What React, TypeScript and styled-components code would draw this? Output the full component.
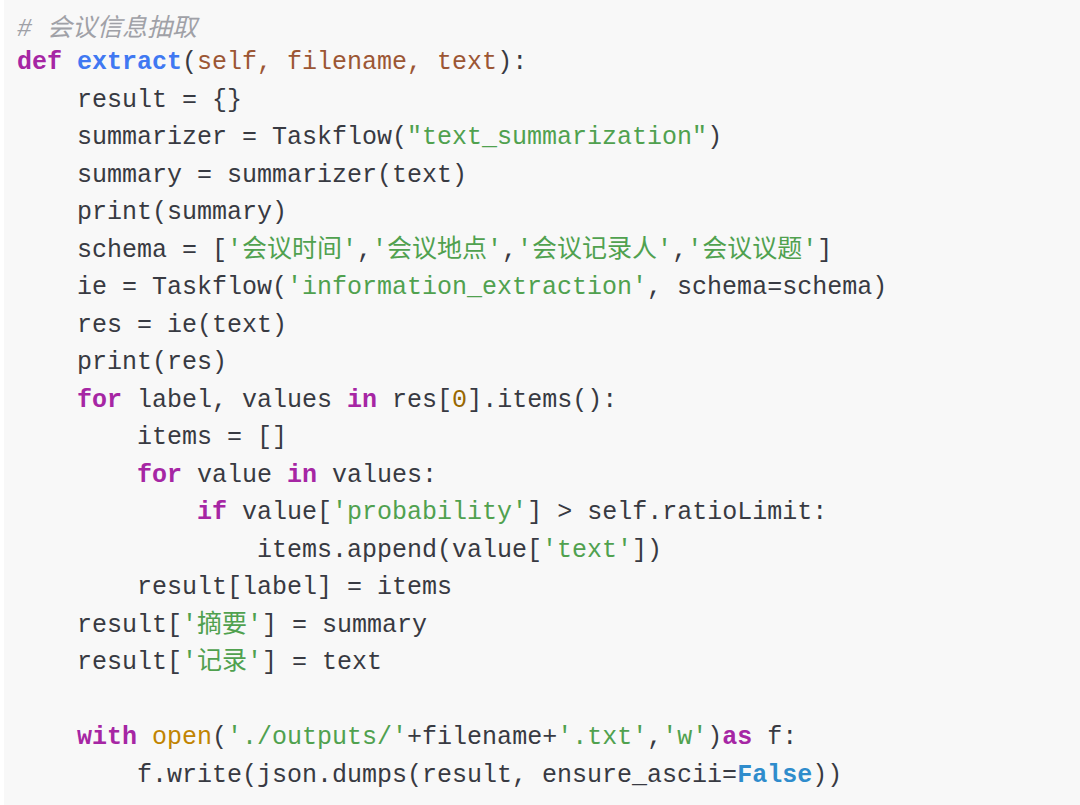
import React from "react";
import styled, { createGlobalStyle } from "styled-components";

const GlobalStyle = createGlobalStyle`
  html, body {
    margin: 0;
    padding: 0;
    background: #ffffff;
  }
  body {
    width: 1080px;
    height: 805px;
    overflow: hidden;
  }
`;

const Page = styled.div`
  display: flex;
  width: 1080px;
  height: 805px;
  padding-left: 4px;
  box-sizing: border-box;
  background: #ffffff;
`;

const CodeBlock = styled.pre`
  flex: 1;
  margin: 0;
  padding: 6.5px 0 0 13px;
  background: #f8f8f8;
  color: #383a42;
  font-family: "Liberation Mono", "Noto Sans CJK SC", monospace;
  font-size: 25px;
  line-height: 37.5px;
  white-space: pre;
  overflow: hidden;
`;

const Line = styled.div`
  height: 37.5px;
`;

type Kind = "kw" | "title" | "params" | "str" | "num" | "builtin" | "lit" | "comment";

const colors: Record<Kind, string> = {
  kw: "#a626a4",
  title: "#4078f2",
  params: "#9c5634",
  str: "#50a14f",
  num: "#986801",
  builtin: "#c18401",
  lit: "#2f8ccc",
  comment: "#a0a1a7",
};

const Tok = styled.span<{ $kind: Kind }>`
  color: ${(p) => colors[p.$kind]};
  font-weight: ${(p) => (p.$kind === "kw" || p.$kind === "title" || p.$kind === "lit" ? 700 : 400)};
  font-style: ${(p) => (p.$kind === "comment" ? "italic" : "normal")};
`;

const CommentCjk = styled.span`
  font-family: "Noto Sans CJK SC", sans-serif;
`;

type Part = string | [Kind, string];

const lines: Part[][] = [
  [["kw", "def"], " ", ["title", "extract"], "(", ["params", "self, filename, text"], "):"],
  ["    result = {}"],
  ["    summarizer = Taskflow(", ["str", "\"text_summarization\""], ")"],
  ["    summary = summarizer(text)"],
  ["    print(summary)"],
  [
    "    schema = [",
    ["str", "'会议时间'"],
    ",",
    ["str", "'会议地点'"],
    ",",
    ["str", "'会议记录人'"],
    ",",
    ["str", "'会议议题'"],
    "]",
  ],
  ["    ie = Taskflow(", ["str", "'information_extraction'"], ", schema=schema)"],
  ["    res = ie(text)"],
  ["    print(res)"],
  ["    ", ["kw", "for"], " label, values ", ["kw", "in"], " res[", ["num", "0"], "].items():"],
  ["        items = []"],
  ["        ", ["kw", "for"], " value ", ["kw", "in"], " values:"],
  ["            ", ["kw", "if"], " value[", ["str", "'probability'"], "] > self.ratioLimit:"],
  ["                items.append(value[", ["str", "'text'"], "])"],
  ["        result[label] = items"],
  ["    result[", ["str", "'摘要'"], "] = summary"],
  ["    result[", ["str", "'记录'"], "] = text"],
  [],
  [
    "    ",
    ["kw", "with"],
    " ",
    ["builtin", "open"],
    "(",
    ["str", "'./outputs/'"],
    "+filename+",
    ["str", "'.txt'"],
    ",",
    ["str", "'w'"],
    ")",
    ["kw", "as"],
    " f:",
  ],
  ["        f.write(json.dumps(result, ensure_ascii=", ["lit", "False"], "))"],
];

export default function App() {
  return (
    <>
      <GlobalStyle />
      <Page>
        <CodeBlock>
          <Line>
            <Tok $kind="comment">
              # <CommentCjk>会议信息抽取</CommentCjk>
            </Tok>
          </Line>
          {lines.map((parts, i) => (
            <Line key={i}>
              {parts.map((p, j) =>
                typeof p === "string" ? (
                  <React.Fragment key={j}>{p}</React.Fragment>
                ) : (
                  <Tok key={j} $kind={p[0]}>
                    {p[1]}
                  </Tok>
                )
              )}
            </Line>
          ))}
        </CodeBlock>
      </Page>
    </>
  );
}
